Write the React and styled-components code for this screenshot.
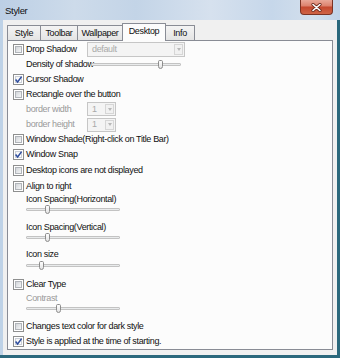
import React from 'react';
import styled, { createGlobalStyle } from 'styled-components';

const Global = createGlobalStyle`
  html, body { margin: 0; padding: 0; }
  body {
    width: 340px; height: 358px; overflow: hidden; background: #fff;
    font-family: "Liberation Sans", Arial, sans-serif;
  }
`;

const Window = styled.div`
  width: 340px; height: 358px;
  display: flex; flex-direction: column;
  background: #bed2e7;
`;

const TitleBar = styled.div`
  height: 20px; flex: none;
  display: flex; align-items: flex-start; justify-content: space-between;
  background: linear-gradient(90deg, #bccfe5 0%, #cddbea 22%, #c3d4e7 40%, #d6e1ee 62%, #c6d7ea 80%, #d3dfec 92%, #c0d3e8 100%);
`;

const Title = styled.span`
  margin: 6px 0 0 5px;
  font-size: 9.5px; letter-spacing: -0.3px; line-height: 10px; color: #101010;
`;

const CloseBtn = styled.div`
  width: 33px; height: 15px; box-sizing: border-box; margin-right: 7px;
  border: 1px solid #7b3324; border-top: none; border-radius: 0 0 4px 4px;
  background: linear-gradient(#e9a898 0%, #dd8470 40%, #c5492f 52%, #cf6446 100%);
  display: flex; align-items: center; justify-content: center;
`;

const Frame = styled.div`
  flex: 1; display: flex;
  padding-left: 3px;
  border-right: 3px solid #2b687c;
  border-bottom: 3px solid #2b687c;
`;

const Body = styled.div`
  flex: 1; display: flex; flex-direction: column;
  background: #f0f0f0;
  padding: 3px 4px 5px 4px;
`;

const Tabs = styled.div`
  height: 17px; flex: none;
  display: flex; align-items: flex-end;
  position: relative; z-index: 1;
`;

const Tab = styled.div`
  box-sizing: border-box;
  width: ${p => p.$w}px;
  height: ${p => (p.$active ? 18 : 15)}px;
  margin-left: -1px;
  margin-bottom: ${p => (p.$active ? -1 : 0)}px;
  &:first-child { margin-left: 0; }
  border: 1px solid #898c95; border-bottom: none;
  border-radius: 1px 1px 0 0;
  background: ${p => (p.$active ? '#fcfcfc' : 'linear-gradient(#f4f4f4, #e4e4e4)')};
  position: relative; z-index: ${p => (p.$active ? 2 : 1)};
  display: flex; align-items: center; justify-content: center;
  padding-bottom: ${p => (p.$active ? 2 : 0)}px;
  font-size: 9px; letter-spacing: -0.35px; color: #101010; line-height: 1;
`;

const Panel = styled.div`
  height: 310px; box-sizing: border-box;
  background: #fcfcfc;
  border: 1px solid #898c95;
  padding-left: 5px;
  display: flex; flex-direction: column;
`;

const Row = styled.div`
  height: ${p => p.$h}px; flex: none;
  margin-top: ${p => p.$mt || 0}px;
  padding-left: ${p => (p.$indent ? 13 : 0)}px;
  display: flex; align-items: center;
  font-size: 9px; letter-spacing: -0.35px; line-height: 1;
  color: ${p => (p.$dim ? '#9a9a9a' : '#101010')};
  white-space: nowrap;
`;

const Box = styled.span`
  width: 11px; height: 11px; box-sizing: border-box; flex: none;
  border: 1px solid #8e8f8f;
  background: #fff;
  padding: 1px;
  display: flex;
`;

const BoxInner = styled.span`
  flex: 1;
  border: 1px solid ${p => (p.$checked ? '#c9ced6' : '#b1b5ba')};
  background: ${p => (p.$checked ? 'linear-gradient(135deg,#f4f4f4,#ffffff)' : 'linear-gradient(135deg,#d2d5d9,#f5f6f7)')};
  display: flex; align-items: center; justify-content: center;
  position: relative;
`;

const CheckMark = styled.svg`
  width: 9px; height: 9px; flex: none; margin: -2px;
`;

const Label = styled.span`
  margin-left: 2px;
  width: ${p => (p.$w ? `${p.$w}px` : 'auto')};
  flex: none;
`;

const FieldLabel = styled.span`
  width: 61px; flex: none;
`;

const Combo = styled.div`
  width: ${p => p.$w}px; height: ${p => p.$h}px; box-sizing: border-box; flex: none;
  border: 1px solid #c6c6c6; background: #f4f4f4;
  display: flex; align-items: center; justify-content: space-between;
  padding: 1px;
  color: #a9a9a9;
`;

const ComboText = styled.span`
  padding-left: 3px;
`;

const DropBtn = styled.span`
  width: 9px; align-self: stretch; box-sizing: border-box;
  border: 1px solid #d6d6d6; background: #f1f1f1;
  display: flex; align-items: center; justify-content: center;
  &::after {
    content: ''; width: 0; height: 0;
    border-left: 2.5px solid transparent; border-right: 2.5px solid transparent;
    border-top: 3px solid #b8b8b8;
  }
`;

const Track = styled.div`
  width: ${p => p.$w}px; height: 3px; box-sizing: border-box; flex: none;
  margin-left: ${p => p.$ml || 0}px;
  background: #e9ebec;
  border: 1px solid #c3c3c3;
  border-radius: 1px;
  position: relative;
`;

const Thumb = styled.span`
  position: absolute; top: -4px;
  width: 5px; height: 9px; box-sizing: border-box;
  border: 1px solid #8c8c8c; border-radius: 2px 2px 3px 3px;
  background: linear-gradient(#ffffff, #e3e3e3);
`;

function Check({ checked }) {
  return (
    <Box>
      <BoxInner $checked={checked}>
        {checked && (
          <CheckMark viewBox="0 0 9 9">
            <path d="M1.6 4.6 L3.6 7 L7.6 1.6" fill="none" stroke="#2d4c9e" strokeWidth="1.5" />
          </CheckMark>
        )}
      </BoxInner>
    </Box>
  );
}

function Slider({ w, pos, ml }) {
  return (
    <Track $w={w} $ml={ml}>
      <Thumb style={{ left: pos - 2.5 }} />
    </Track>
  );
}

const tabs = [
  { t: 'Style', w: 34 },
  { t: 'Toolbar', w: 38 },
  { t: 'Wallpaper', w: 46 },
  { t: 'Desktop', w: 44, active: true },
  { t: 'Info', w: 30 },
];

export default function App() {
  return (
    <>
      <Global />
      <Window>
        <TitleBar>
          <Title>Styler</Title>
          <CloseBtn>
            <svg width="11" height="9" viewBox="0 0 11 9">
              <path d="M2 1.5 L9 7.5 M9 1.5 L2 7.5" stroke="#6d2a1d" strokeWidth="3.2" strokeLinecap="round" />
              <path d="M2 1.5 L9 7.5 M9 1.5 L2 7.5" stroke="#ffffff" strokeWidth="1.6" strokeLinecap="round" />
            </svg>
          </CloseBtn>
        </TitleBar>
        <Frame>
          <Body>
            <Tabs>
              {tabs.map(t => (
                <Tab key={t.t} $w={t.w} $active={t.active}>{t.t}</Tab>
              ))}
            </Tabs>
            <Panel>
              <Row $h={16}>
                <Check />
                <Label $w={61}>Drop Shadow</Label>
                <Combo $w={98} $h={15}>
                  <ComboText>default</ComboText>
                  <DropBtn />
                </Combo>
              </Row>
              <Row $h={14} $indent>
                <span>Density of shadow</span>
                <Slider w={90} pos={69} ml={-3} />
              </Row>
              <Row $h={16}>
                <Check checked />
                <Label>Cursor Shadow</Label>
              </Row>
              <Row $h={14}>
                <Check />
                <Label>Rectangle over the button</Label>
              </Row>
              <Row $h={16} $indent $dim>
                <FieldLabel>border width</FieldLabel>
                <Combo $w={29} $h={14}>
                  <ComboText>1</ComboText>
                  <DropBtn />
                </Combo>
              </Row>
              <Row $h={15} $indent $dim>
                <FieldLabel>border height</FieldLabel>
                <Combo $w={29} $h={14}>
                  <ComboText>1</ComboText>
                  <DropBtn />
                </Combo>
              </Row>
              <Row $h={14}>
                <Check />
                <Label>Window Shade(Right-click on Title Bar)</Label>
              </Row>
              <Row $h={16}>
                <Check checked />
                <Label>Window Snap</Label>
              </Row>
              <Row $h={16}>
                <Check />
                <Label>Desktop icons are not displayed</Label>
              </Row>
              <Row $h={16}>
                <Check />
                <Label>Align to right</Label>
              </Row>
              <Row $h={10} $indent>Icon Spacing(Horizontal)</Row>
              <Row $h={10} $indent><Slider w={94} pos={20} /></Row>
              <Row $h={10} $mt={8} $indent>Icon Spacing(Vertical)</Row>
              <Row $h={10} $indent><Slider w={94} pos={20} /></Row>
              <Row $h={10} $mt={7} $indent>Icon size</Row>
              <Row $h={10} $mt={1} $indent><Slider w={94} pos={14} /></Row>
              <Row $h={16} $mt={6}>
                <Check />
                <Label>Clear Type</Label>
              </Row>
              <Row $h={10} $mt={1} $indent $dim>Contrast</Row>
              <Row $h={10} $indent><Slider w={94} pos={31} /></Row>
              <Row $h={16} $mt={5}>
                <Check />
                <Label>Changes text color for dark style</Label>
              </Row>
              <Row $h={14}>
                <Check checked />
                <Label>Style is applied at the time of starting.</Label>
              </Row>
            </Panel>
          </Body>
        </Frame>
      </Window>
    </>
  );
}
